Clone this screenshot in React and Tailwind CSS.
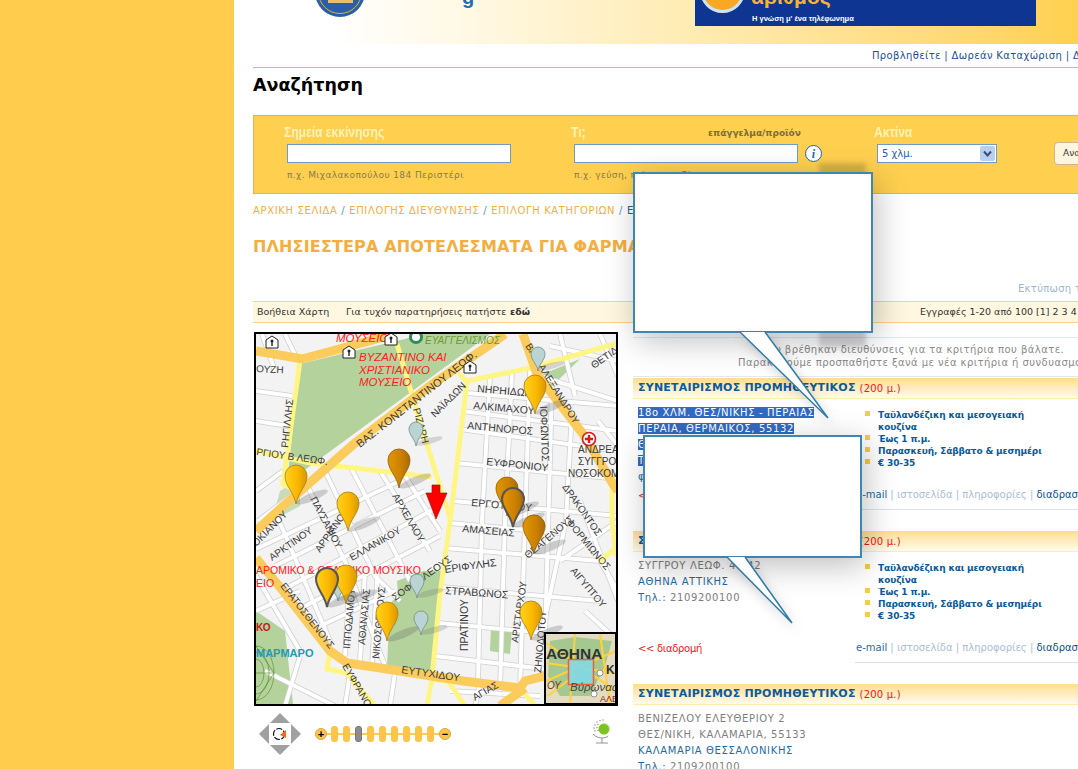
import React from "react";

const V = { fontFamily: '"DejaVu Sans", Verdana, sans-serif' };
const A = { fontFamily: '"Liberation Sans", Arial, sans-serif' };

const orange = [
  "M505 333L430 385L355 442L283 505L256 530",
  "M256 350L302 358L343 347L395 333",
  "M523 333L537 373L583 433L613 483L618 490",
  "M256 557L283 590L330 650L347 662L400 670L463 680L520 687L525 680L545 675",
  "M525 687L500 705",
];
const yellow = [
  "M300 360L283 483L296 490",
  "M397 343L413 397L430 453L450 517",
  "M467 380L457 463L450 520L440 593L432 677L427 705",
  "M458 372L467 380L530 367L618 342",
  "M256 450L310 462L432 476",
  "M612 483L612 520L616 555",
  "M432 678L448 680L465 705",
  "M330 650L327 668L347 672L375 705",
  "M520 687L535 705",
  "M600 560L618 545",
];
const minor = [
  "M467 392L618 405", "M462 410L618 430", "M460 428L618 450", "M456 462L618 478", "M453 500L618 515", "M450 522L560 532", "M445 547L600 560", "M441 586L600 600", "M438 622L545 632", "M435 655L545 668",
  "M490 375L482 520L478 680", "M512 372L505 520L500 690", "M530 370L525 520L520 690", "M552 385L545 640", "M572 410L566 520L540 640", "M598 420L618 445",
  "M256 490L283 470", "M258 520L330 465", "M256 548L400 480", "M275 565L425 490", "M290 585L440 505", "M305 605L440 535", "M320 625L395 590", "M256 610L300 590",
  "M300 470L345 560L385 665", "M325 470L375 575L400 600", "M350 465L410 580", "M380 470L430 550", "M405 475L440 530", "M275 510L330 640", "M256 575L300 650",
  "M350 575L345 655", "M365 570L360 660", "M378 565L372 665", "M256 390L292 395", "M256 420L288 425", "M262 333L275 370", "M285 333L298 360",
  "M540 375L618 400", "M550 345L618 360", "M600 333L618 375", "M560 333L575 395", "M580 500L618 600", "M560 560L618 520", "M585 610L618 640", "M600 560L618 590",
  "M450 690L540 695", "M265 670L335 705", "M300 655L285 705", "M350 672L345 705", "M395 672L390 705", "M480 682L475 705",
];
const labels = [
  ["ΒΑΣ. ΚΟΝΣΤΑΝΤΙΝΟΥ ΛΕΩΦ.", 360, 447, -38, 11],
  ["ΡΗΓΙΛΛΗΣ", 288, 447, -84, 10],
  ["ΟΥΖΗ", 256, 371, 3, 10],
  ["ΡΓΙΟΥ Β ΛΕΩΦ.", 256, 454, 8, 10],
  ["ΡΙΖΑΡΗ", 413, 408, 75, 10],
  ["ΝΑΪΑΔΩΝ", 435, 417, -45, 10],
  ["ΝΗΡΗΙΔΩΝ", 477, 391, 5, 10.5],
  ["ΑΛΚΙΜΑΧΟΥ", 473, 408, 5, 10.5],
  ["ΑΝΤΗΝΟΡΟΣ", 467, 428, 5, 10.5],
  ["ΕΥΦΡΟΝΙΟΥ", 486, 464, 6, 10.5],
  ["ΕΡΓΟΤΙΜΟΥ", 471, 505, 5, 10.5],
  ["ΑΜΑΣΕΙΑΣ", 462, 531, 5, 10.5],
  ["ΕΡΙΦΥΛΗΣ", 445, 572, -8, 10.5],
  ["ΣΤΡΑΒΩΝΟΣ", 445, 593, 4, 10.5],
  ["ΙΟΦΩΝΤΟΣ", 540, 405, 88, 10.5],
  ["ΒΑΣ. ΑΛΕΞΑΝΔΡΟΥ", 525, 345, 58, 10],
  ["ΘΕΤΙΔΟΣ", 594, 368, -35, 10],
  ["ΑΝΔΡΕΑΣ", 578, 452, 0, 10],
  ["ΣΥΓΓΡΟΣ", 578, 464, 0, 10],
  ["ΝΟΣΟΚΟΜΕΙΟ", 568, 476, 0, 10],
  ["ΔΡΑΚΟΝΤΟΣ", 562, 486, 55, 10],
  ["ΦΟΡΜΙΩΝΟΣ", 566, 522, 50, 10],
  ["ΑΙΓΥΠΤΟΥ", 570, 570, 50, 10],
  ["ΘΕΑΓΕΝΟΥΣ", 528, 558, -40, 10],
  ["ΑΡΙΣΤΑΡΧΟΥ", 518, 642, -82, 10],
  ["ΖΗΝΟΔΟΤΟΥ", 541, 672, -85, 10],
  ["ΠΡΑΤΙΝΟΥ", 468, 650, -90, 10.5],
  ["ΙΠΠΟΔΑΜΟΥ", 350, 648, -85, 10],
  ["ΑΘΑΝΑΣΙΑΣ", 365, 644, -85, 10],
  ["ΝΙΚΟΣΘΕΝΟΥΣ", 379, 658, -85, 10],
  ["ΣΟΦΟΚΛΕΟΥΣ", 395, 600, -35, 10],
  ["ΕΡΑΤΟΣΘΕΝΟΥΣ", 280, 585, 52, 10],
  ["ΕΥΤΥΧΙΔΟΥ", 401, 672, 8, 10.5],
  ["ΕΥΦΡΑΝΟΡΟΣ", 342, 665, 60, 10],
  ["ΑΡΚΤΙΝΟΥ", 272, 560, -35, 10],
  ["ΠΑΥΣΑΝΙΟΥ", 310, 498, 62, 10],
  ["ΑΡΡΙΑΝΟΥ", 320, 552, -55, 10],
  ["ΕΛΛΑΝΙΚΟΥ", 352, 560, -30, 10],
  ["ΑΡΧΕΛΑΟΥ", 392, 495, 60, 10],
  ["ΟΚΙΑΝΟΥ", 256, 546, -45, 10],
  ["ΑΓΙΑΣ", 475, 700, -30, 10],
];

function Pin({ x, y, kind = "gold", dark }) {
  const fill = kind === "gold" ? "url(#pg)" : "url(#po)";
  return (
    <g transform={`translate(${x} ${y})`}>
      <ellipse cx="16" cy="-7" rx="17" ry="4" transform="rotate(-22 16 -7)" fill="#666" opacity="0.28" />
      <path
        d="M0 0C-2-12-11-18-11-28A11 11 0 0 1 11-28C11-18 2-12 0 0Z"
        fill={fill}
        stroke={dark ? "#555" : kind === "gold" ? "#A87C10" : "#8F5C00"}
        strokeWidth={dark ? 2 : 0.8}
      />
    </g>
  );
}

function Ghost({ x, y }) {
  return (
    <g transform={`translate(${x} ${y})`}>
      <ellipse cx="13" cy="-5" rx="14" ry="3" transform="rotate(-15 13 -5)" fill="#666" opacity="0.22" />
      <path d="M0 0C-1-7-7-11-7-17A7 7 0 0 1 7-17C7-11 1-7 0 0Z" fill="#B9D4D2" stroke="#6F8E90" strokeWidth="0.8" />
    </g>
  );
}

function MapDrawing() {
  return (
    <svg viewBox="256 333 360 370" className="block w-[360px] h-[370px]" style={A}>
      <defs>
        <linearGradient id="pg" x1="0" x2="1">
          <stop offset="0" stopColor="#FFD21C" />
          <stop offset="0.55" stopColor="#FBB800" />
          <stop offset="1" stopColor="#D99800" />
        </linearGradient>
        <linearGradient id="po" x1="0" x2="1">
          <stop offset="0" stopColor="#E29600" />
          <stop offset="0.6" stopColor="#CC8000" />
          <stop offset="1" stopColor="#A86A05" />
        </linearGradient>
      </defs>
      <rect x="256" y="333" width="360" height="370" fill="#F3F3F3" />
      <polygon points="300,363 345,352 405,338 420,333 490,333 287,482" fill="#B4D29C" />
      <polygon points="543,373 580,358 550,387" fill="#B4D29C" />
      <polygon points="387,665 390,603 398,593 397,580 423,570 442,570 436,617 431,679" fill="#B4D29C" />
      <polygon points="491,625 512,627 510,653 490,650" fill="#B4D29C" />
      <polygon points="256,610 285,630 293,703 256,703" fill="#B4D29C" />
      <polygon points="280,490 300,478 300,505 272,520" fill="#B4D29C" opacity="0.7" />
      {minor.map((d, i) => (
        <path key={"a" + i} d={d} fill="none" stroke="#CFCFCF" strokeWidth="5.5" />
      ))}
      {minor.map((d, i) => (
        <path key={"b" + i} d={d} fill="none" stroke="#FFFFFF" strokeWidth="4" />
      ))}
      <g fill="none" stroke="#4F8A1E" strokeWidth="0.6">
        <ellipse cx="256" cy="672" rx="18" ry="27" />
        <ellipse cx="256" cy="672" rx="13" ry="21" />
        <ellipse cx="256" cy="672" rx="8" ry="14" />
        <path d="M256 645L274 672M256 700L274 672M256 672L274 672" />
      </g>
      {yellow.map((d, i) => (
        <path key={"y" + i} d={d} fill="none" stroke="#FFF585" strokeWidth="5" />
      ))}
      {orange.map((d, i) => (
        <path key={"o" + i} d={d} fill="none" stroke="#FBCB5C" strokeWidth="9" />
      ))}
      {labels.map(([t, x, y, r, s], i) => (
        <text key={i} x={x} y={y} fontSize={s} fill="#3A3A3A" transform={`rotate(${r} ${x} ${y})`}>
          {t}
        </text>
      ))}
      <g fill="#FF2020" fontSize="11.5" fontStyle="italic">
        <text x="336" y="341">ΜΟΥΣΕΙΟ</text>
        <text x="359" y="360">ΒΥΖΑΝΤΙΝΟ ΚΑΙ</text>
        <text x="359" y="373">ΧΡΙΣΤΙΑΝΙΚΟ</text>
        <text x="359" y="385">ΜΟΥΣΕΙΟ</text>
        <text x="256" y="573" fontStyle="normal" fontSize="10.5">ΑΡΟΜΙΚΟ &amp; ΘΕΑΤΡΙΚΟ ΜΟΥΣΙΚΟ</text>
        <text x="256" y="586" fontStyle="normal" fontSize="10.5">ΕΙΟ</text>
      </g>
      <text x="425" y="343" fontSize="10" fill="#6A9A35" fontStyle="italic">ΕΥΑΓΓΕΛΙΣΜΟΣ</text>
      <text x="256" y="656" fontSize="11" fontWeight="700" fill="#1C9AB8">ΜΑΡΜΑΡΟ</text>
      <text x="256" y="630" fontSize="10" fontWeight="700" fill="#C01818">ΚΟ</text>
      {[[272, 341], [349, 351], [391, 338], [470, 366]].map(([x, y], i) => (
        <g key={i} transform={`translate(${x} ${y})`}>
          <path d="M-6 6V-2L0-6L6-2V6Z" fill="#fff" stroke="#222" strokeWidth="1" />
          <circle cx="0" cy="-1" r="1.5" fill="#222" />
          <rect x="-0.7" y="-1" width="1.4" height="5" fill="#222" />
        </g>
      ))}
      <circle cx="416" cy="336" r="7" fill="#2D8C5A" />
      <circle cx="416" cy="336" r="4" fill="#fff" />
      <circle cx="589" cy="438" r="6.5" fill="#fff" stroke="#E01818" strokeWidth="1.6" />
      <path d="M589 434V442M585 438H593" stroke="#E01818" strokeWidth="2.4" />
      <Ghost x={538} y={370} />
      <Ghost x={416} y={445} />
      <Ghost x={417} y={597} />
      <Ghost x={421} y={634} />
      <Ghost x={338} y={600} />
      <Pin x={535} y={413} />
      <Pin x={399} y={487} kind="orange" />
      <Pin x={296} y={503} />
      <Pin x={348} y={530} />
      <Pin x={507} y={515} kind="orange" />
      <Pin x={513} y={526} kind="orange" dark />
      <Pin x={534} y={553} kind="orange" />
      <Pin x={346} y={603} />
      <Pin x={327} y={606} dark />
      <Pin x={387} y={640} />
      <Pin x={531} y={639} />
      <path d="M432 484H440V492H447L436 518L426 492H432Z" fill="#FF0000" stroke="#A00000" strokeWidth="0.6" />
      <g>
        <rect x="545" y="632" width="71" height="71" fill="#E4DCC0" stroke="#000" strokeWidth="2" />
        <polygon points="550,640 575,636 612,640 605,665 590,695 560,695 548,675" fill="#A4C890" />
        <path d="M546 642L616 690M546 680L616 650M575 633L570 703M600 633L610 703M546 662L616 672M548 695L580 670" stroke="#FFD23C" strokeWidth="2" fill="none" />
        <rect x="568.500" y="658.500" width="25" height="25" fill="#7FD8E8" fillOpacity="0.9" stroke="#E8603C" strokeWidth="1.5" />
        <text x="546" y="658" fontSize="15.5" fontWeight="700" fill="#333">ΑΘΗΝΑ</text>
        <text x="570" y="690" fontSize="11.5" fontStyle="italic" fill="#444">Βύρωνας</text>
        <text x="606" y="673" fontSize="12" fill="#333" fontWeight="700">Κ</text>
        <text x="600" y="701" fontSize="9" fill="#8A2222">ΑΛΕ</text>
        <text x="547" y="688" fontSize="10" fontStyle="italic" fill="#7A3A1A">ΟΥ</text>
        <circle cx="600" cy="672" r="3" fill="#fff" stroke="#555" strokeWidth="0.6" />
        <circle cx="594" cy="693" r="3" fill="#fff" stroke="#555" strokeWidth="0.6" />
        <rect x="545" y="632" width="71" height="71" fill="none" stroke="#000" strokeWidth="2" />
      </g>
    </svg>
  );
}

function PanControl() {
  return (
    <svg width="42" height="42" viewBox="0 0 42 42" className="shrink-0">
      <g fill="#A0A0A0">
        <polygon points="21,0 31,10 11,10" />
        <polygon points="21,42 31,32 11,32" />
        <polygon points="0,21 10,11 10,31" />
        <polygon points="42,21 32,11 32,31" />
      </g>
      <circle cx="20" cy="21" r="5.500" fill="none" stroke="#111" strokeWidth="1.2" strokeDasharray="6 1.500" />
      <polygon points="21,22 27,17 27,25" fill="#F26A1B" />
    </svg>
  );
}

function ZoomSlider() {
  const stops = [0, 1, 2, 3, 4, 5, 6, 7, 8];
  return (
    <div className="relative flex items-center gap-[5px] h-[16px]">
      <div className="absolute left-[6px] right-[6px] top-[7px] h-[2px] bg-[#FBCB5C]" />
      <div className="relative w-[12px] h-[12px] rounded-full bg-[#FBC54C] border border-[#E0A838] flex items-center justify-center text-[11px] leading-none font-bold text-black mr-[-1px]" style={A}>+</div>
      {stops.map((s) => (
        <div key={s} className={s === 2 ? "relative w-[7px] h-[16px] rounded-[3px] bg-[#8C8C8C] border border-[#777]" : "relative w-[7px] h-[16px] rounded-[3px] bg-[#FBC54C]"} />
      ))}
      <div className="relative w-[12px] h-[12px] rounded-full bg-[#FBC54C] border border-[#E0A838] flex items-center justify-center text-[11px] leading-none font-bold text-black" style={A}>−</div>
    </div>
  );
}

function Emblem() {
  return (
    <svg width="22" height="26" viewBox="0 0 22 26" className="shrink-0">
      <circle cx="13" cy="11" r="5.500" fill="#7CC520" />
      <path d="M13 5.500A5.500 5.500 0 0 1 18.500 11" fill="none" stroke="#C9E89A" strokeWidth="1" />
      <g fill="#8A8A8A">
        <circle cx="6" cy="4" r="0.700" /><circle cx="9" cy="2.500" r="0.700" /><circle cx="12" cy="2" r="0.700" />
        <circle cx="4" cy="7" r="0.700" /><circle cx="7" cy="6.500" r="0.700" /><circle cx="3" cy="10" r="0.700" />
        <circle cx="6" cy="9.500" r="0.700" /><circle cx="4" cy="13" r="0.700" /><circle cx="7" cy="12.500" r="0.700" />
      </g>
      <path d="M2 16C5 19 8 20 11 20M11 20V25M5 25H17M11 20C13 20 15 19.500 17 18.500" fill="none" stroke="#7A7A7A" strokeWidth="0.8" />
    </svg>
  );
}

const facts = ["Ταϋλανδέζικη και μεσογειακή κουζίνα", "Έως 1 π.μ.", "Παρασκευή, Σάββατο & μεσημέρι", "€ 30-35"];

function Result({ lines, showFacts = true }) {
  return (
    <section className="w-[520px]">
      <header className="h-[21px] pl-[5px] flex items-center gap-[4px] bg-gradient-to-b from-[#FFDD8C] to-[#FFFBEF] border-b border-[#FFE9B5] whitespace-nowrap">
        <span className="text-[11px] font-bold text-[#0A5A9C] tracking-[0.2px]">ΣΥΝΕΤΑΙΡΙΣΜΟΣ ΠΡΟΜΗΘΕΥΤΙΚΟΣ</span>
        <span className="text-[10px] tracking-[0.2px] text-[#F01818]">(200 μ.)</span>
      </header>
      <div className="h-[111px] flex">
        <div className="w-[222px] pl-[5px] pt-[6px] pb-[7px] flex flex-col justify-between shrink-0">
          <div className="text-[10px] leading-[16px] tracking-[0.65px] whitespace-nowrap">
            {lines.map(([t, c, hl], i) => (
              <div key={i} className={c}>
                {hl ? <span className="bg-[#316AC5] text-white">{t}</span> : t}
              </div>
            ))}
          </div>
          {showFacts && (
            <div className="text-[10px] leading-[14px] text-[#F01818] tracking-[-0.3px]">&lt;&lt; διαδρομή</div>
          )}
        </div>
        {showFacts && (
          <div className="w-[290px] border-b border-[#DDE3EA] pt-[10px] pb-[7px] pl-[10px] flex flex-col justify-between">
            <ul className="w-[188px]">
              {facts.map((f) => (
                <li key={f} className="flex text-[9px] leading-[12px] font-bold tracking-[-0.15px] text-[#0A5A9C]">
                  <span className="w-[5px] h-[5px] mt-[2px] mr-[8px] bg-[#F4CB50] shrink-0" />
                  <span>{f}</span>
                </li>
              ))}
            </ul>
            <div className="text-[10px] leading-[14px] whitespace-nowrap -ml-[9px] text-[#A9BED2]">
              <span className="text-[#1F6AA8]">e-mail</span> | ιστοσελίδα | πληροφορίες | <span className="text-[#0A4F95]">διαδραστική</span>
            </div>
          </div>
        )}
      </div>
    </section>
  );
}

function Phone({ n }) {
  return (
    <>
      <span className="text-[#1F6AA8]">Τηλ.:</span> <span className="text-[#7E7E7E]">{n}</span>
    </>
  );
}

function Bubble({ cls, w, h, tail }) {
  return (
    <div className={cls}>
      <div className="relative bg-white border-2 border-[#3F86B5] shadow-[4px_8px_30px_rgba(0,0,0,0.25)]" style={{ width: w, height: h }} />
      <svg className="absolute left-0 top-0 overflow-visible pointer-events-none drop-shadow-[3px_5px_6px_rgba(0,0,0,0.18)]" width={w} height={h}>
        <path d={tail} fill="#fff" stroke="#2F7DA8" strokeWidth="1.5" />
      </svg>
    </div>
  );
}

export default function App() {
  const blue = "text-[#1F6AA8]";
  const grey = "text-[#7E7E7E]";
  const fancy = "block w-max origin-left scale-x-[0.86] text-[14px] leading-[17px] font-bold text-[#FFF3B8]";
  return (
    <div className="relative w-[1078px] h-[769px] overflow-hidden flex bg-white" style={V}>
      <aside className="w-[234px] shrink-0 bg-[#FFCC4E]" />
      <main className="w-[844px] shrink-0 overflow-hidden">
        <div className="relative h-[44px] bg-gradient-to-r from-white from-[12%] via-[#FFE9A8] via-[60%] to-[#FFD04F] overflow-hidden">
          <div className="absolute left-[81px] -top-[33px] w-[50px] h-[50px] rounded-full bg-[#2A5FA8] overflow-hidden">
            <div className="absolute inset-[3px] rounded-full border border-[#E3B23A]" />
            <div className="absolute left-[13px] top-[33px] w-[25px] h-[3px] bg-[#E3C36A]" />
          </div>
          <div className="absolute left-[228px] -top-[18px] text-[20px] font-bold text-[#1F6FB0]" style={A}>g</div>
          <div className="absolute left-[461px] top-0 w-[341px] h-[26px] bg-[#0E3591] overflow-hidden">
            <div className="absolute left-[5px] -top-[32px] w-[45px] h-[45px] rounded-full bg-[#F9A825] border-[3px] border-[#CFE4F2]" />
            <div className="absolute left-[56px] -top-[15px] text-[21px] leading-[24px] font-bold text-[#F9B233]" style={A}>αριθμός</div>
            <div className="absolute left-[57px] top-[14px] text-[7.5px] leading-[10px] font-bold text-white whitespace-nowrap" style={A}>Η γνώση μ' ένα τηλέφωνημα</div>
          </div>
        </div>

        <div className="ml-[19px] h-[24px] border-b border-[#E8B55E] pl-[619px] flex items-center whitespace-nowrap text-[10px] tracking-[0.35px] text-[#1A4F9C]">
          Προβληθείτε | Δωρεάν Καταχώριση | Διαφήμιση
        </div>
        <h1 className="ml-[19px] h-[47px] pt-[5px] text-[17.5px] leading-[24px] font-bold text-black">Αναζήτηση</h1>

        <form className="ml-[19px] w-[840px] h-[79px] bg-[#FFD04F] border border-[#EDB04A] flex pl-[30px] pt-[8px] whitespace-nowrap">
          <div className="w-[287px] shrink-0">
            <div className="h-[18px]"><span className={fancy} style={A}>Σημεία εκκίνησης</span></div>
            <div className="ml-[3px] mt-[2px] w-[224px] h-[19px] bg-white border border-[#6E9CC8]" />
            <div className="ml-[3px] mt-[7px] text-[9px] leading-[11px] tracking-[0.4px] text-[#8B7A4E]">π.χ. Μιχαλακοπούλου 184 Περιστέρι</div>
          </div>
          <div className="w-[303px] shrink-0">
            <div className="h-[18px] flex items-start">
              <span className="w-[137px] shrink-0"><span className={fancy} style={A}>Τι;</span></span>
              <span className="mt-[4px] text-[9px] leading-[11px] font-bold text-[#7D6C3E]">επάγγελμα/προϊόν</span>
            </div>
            <div className="mt-[2px] flex items-center gap-[7px]">
              <div className="ml-[3px] w-[224px] h-[19px] bg-white border border-[#6E9CC8]" />
              <div className="w-[17px] h-[17px] rounded-full bg-white border border-[#1F6AA8] flex items-center justify-center text-[12px] leading-none font-bold italic text-[#1F6AA8]" style={{ fontFamily: '"Liberation Serif", serif' }}>i</div>
            </div>
            <div className="ml-[3px] mt-[7px] text-[9px] leading-[11px] tracking-[0.4px] text-[#8B7A4E]">π.χ. γεύση, πιάτο, κουζίνα</div>
          </div>
          <div className="w-[180px] shrink-0">
            <div className="h-[18px]"><span className={fancy} style={A}>Ακτίνα</span></div>
            <div className="ml-[3px] mt-[2px] w-[120px] h-[19px] bg-white border border-[#6E9CC8] flex items-center justify-between pl-[4px] pr-px text-[10px] text-[#1F5FA8]">
              <span>5 χλμ.</span>
              <span className="w-[15px] h-[15px] rounded-[2px] bg-[#B9CFF0] flex items-center justify-center">
                <svg width="9" height="7" viewBox="0 0 9 7"><path d="M1 1.500L4.500 5.500L8 1.500" fill="none" stroke="#3A4F7A" strokeWidth="2" /></svg>
              </span>
            </div>
          </div>
          <div className="mt-[18px] h-[23px] w-[60px] rounded-[4px] border border-[#C9B98C] bg-[#FFF6DF] pl-[8px] text-[9px] leading-[21px] text-[#333]">Αναζήτηση</div>
        </form>

        <nav className="ml-[19px] mt-[10px] h-[14px] text-[10px] leading-[14px] tracking-[0.65px] text-[#F3AE3F] whitespace-nowrap">
          ΑΡΧΙΚΗ ΣΕΛΙΔΑ <span className="text-[#5B8FC0]">/</span> ΕΠΙΛΟΓΗΣ ΔΙΕΥΘΥΝΣΗΣ <span className="text-[#5B8FC0]">/</span> ΕΠΙΛΟΓΗ ΚΑΤΗΓΟΡΙΩΝ <span className="text-[#5B8FC0]">/</span> <span className="text-[#1F5FA8]">ΕΠΙΛΟΓΗ</span>
        </nav>
        <h2 className="ml-[19px] mt-[19px] h-[20px] text-[16px] leading-[20px] tracking-[0.15px] font-bold text-[#F3AE3F] whitespace-nowrap">ΠΛΗΣΙΕΣΤΕΡΑ ΑΠΟΤΕΛΕΣΜΑΤΑ ΓΙΑ ΦΑΡΜΑΚΕΙΑ</h2>
        <div className="ml-[784px] mt-[25px] h-[14px] text-[10px] leading-[14px] tracking-[0.3px] text-[#9DB6D2] whitespace-nowrap">Εκτύπωση της σελίδας</div>

        <div className="ml-[19px] mt-[5px] w-[840px] h-[22px] bg-[#FFF7DF] border-y border-[#F9D48A] flex items-center text-[9.5px] text-[#333] whitespace-nowrap">
          <span className="ml-[4px] w-[89px] shrink-0">Βοήθεια Χάρτη</span>
          <span className="w-[164px] shrink-0">Για τυχόν παρατηρήσεις πατήστε</span>
          <span className="font-bold w-[410px] shrink-0">εδώ</span>
          <span>Εγγραφές 1-20 από 100 [1] 2 3 4 5</span>
        </div>

        <div className="ml-[19px] mt-[9px] flex">
          <div className="w-[380px] shrink-0">
            <div className="ml-px w-[364px] h-[374px] border-2 border-black overflow-hidden">
              <MapDrawing />
            </div>
            <div className="mt-[7px] ml-[6px] w-[354px] flex items-center">
              <PanControl />
              <div className="ml-[14px]"><ZoomSlider /></div>
              <div className="ml-auto -mt-[6px]"><Emblem /></div>
            </div>
          </div>
          <div className="w-[520px] shrink-0">
            <div className="w-[445px] h-[40px] mt-[5px] border-y border-[#E2E9F1] pt-[5px] text-[10px] leading-[13px] tracking-[0.45px] text-[#8A8A8A] whitespace-nowrap">
              <div className="pl-[129px]">Δεν βρέθηκαν διευθύνσεις για τα κριτήρια που βάλατε.</div>
              <div className="pl-[105px]">Παρακαλούμε προσπαθήστε ξανά με νέα κριτήρια ή συνδυασμούς</div>
            </div>
            <div className="mt-[1px]" />
            <Result
              lines={[
                ["18ο ΧΛΜ. ΘΕΣ/ΝΙΚΗΣ - ΠΕΡΑΙΑΣ", "", true],
                ["ΠΕΡΑΙΑ, ΘΕΡΜΑΙΚΟΣ, 55132 ", "", true],
                ["ΘΕΣΣΑΛΟΝΙΚΗΣ", "", true],
                ["Τηλ.: 2310000000", "", true],
                ["φαξ: 2310000000", blue, false],
              ]}
            />
            <div className="h-[21px]" />
            <Result
              lines={[
                ["ΣΥΓΓΡΟΥ ΛΕΩΦ. 40-42", grey],
                ["ΑΘΗΝΑ ΑΤΤΙΚΗΣ", blue],
                [<Phone key="p" n="2109200100" />, ""],
              ]}
            />
            <div className="h-[21px]" />
            <Result
              showFacts={false}
              lines={[
                ["ΒΕΝΙΖΕΛΟΥ ΕΛΕΥΘΕΡΙΟΥ 2", grey],
                ["ΘΕΣ/ΝΙΚΗ, ΚΑΛΑΜΑΡΙΑ, 55133", grey],
                ["ΚΑΛΑΜΑΡΙΑ ΘΕΣΣΑΛΟΝΙΚΗΣ", blue],
                [<Phone key="p" n="2109200100" />, ""],
              ]}
            />
          </div>
        </div>
      </main>

      <div className="absolute left-[819px] top-[163px] w-[47px] h-[184px] bg-black/15 blur-[2px]" />
      <Bubble cls="absolute left-[633px] top-[172px]" w={240} h={161} tail="M107 160L195 246L132 160" />
      <Bubble cls="absolute left-[643px] top-[435px]" w={219} h={123} tail="M84 122L149 188L102 122" />
    </div>
  );
}
